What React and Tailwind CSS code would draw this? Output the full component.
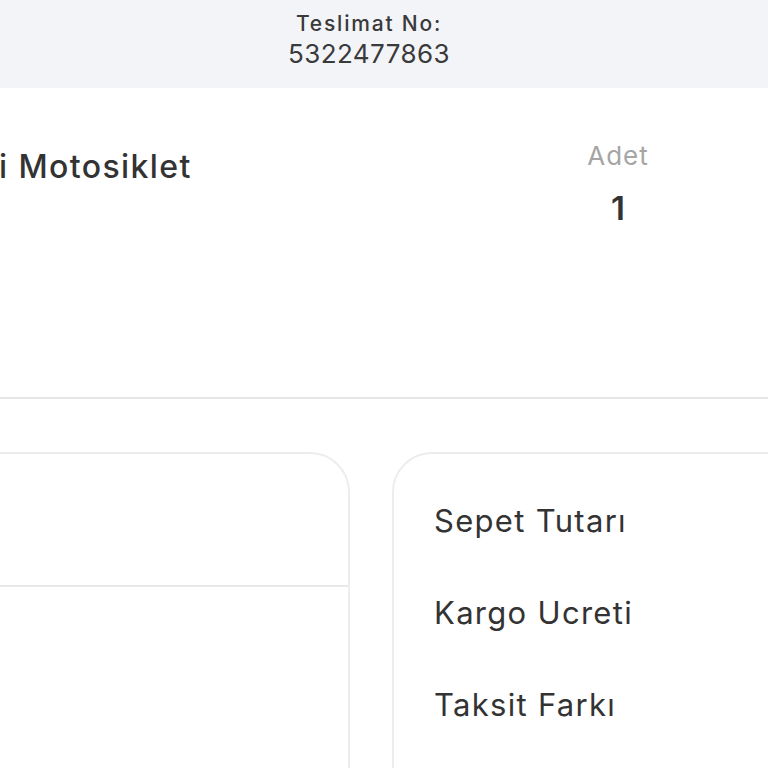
import React from "react";

const font = { fontFamily: '"Inter", "Noto Sans", sans-serif' };

export default function App() {
  return (
    <div className="w-[768px] h-[768px] overflow-hidden bg-white text-[#333]" style={font}>
      {/* Teslimat bar */}
      <div className="h-[88px] bg-[#f3f4f8] flex flex-col items-center justify-center pr-[30px] pb-[6px]">
        <div className="text-[21px] leading-[26px] text-[#3a3a3a] font-medium tracking-[1.8px]">Teslimat No:</div>
        <div className="text-[26px] leading-[34px] text-[#3a3a3a] tracking-[0.4px]">5322477863</div>
      </div>

      {/* Product row */}
      <div className="h-[311px] flex border-b-2 border-[#e6e6e6]">
        <div className="flex-1 pt-[59px]">
          <div className="text-[32px] leading-[40px] font-medium text-[#333] tracking-[1.4px] -ml-[1px]">i Motosiklet</div>
        </div>
        <div className="w-[140px] mr-[80px] flex flex-col items-center pt-[52px]">
          <div className="text-[26px] leading-[32px] text-[#a5a5a5] tracking-[1px]">Adet</div>
          <div className="text-[33px] leading-[40px] font-semibold text-[#333] mt-[16px]">1</div>
        </div>
      </div>

      {/* Cards */}
      <div className="flex gap-[42px] pt-[53px]">
        <div className="w-[400px] -ml-[50px] shrink-0 h-[400px] border-2 border-[#ededed] rounded-[40px]">
          <div className="h-[133px] border-b-2 border-[#e8e8e8]" />
        </div>
        <div className="w-[420px] shrink-0 h-[400px] border-2 border-[#ededed] rounded-[40px] pl-[40px] pt-[47px] flex flex-col gap-[52px]">
          <div className="text-[31px] leading-[40px] text-[#333] tracking-[1.3px]">Sepet Tutarı</div>
          <div className="text-[31px] leading-[40px] text-[#333] tracking-[1.3px]">Kargo Ucreti</div>
          <div className="text-[31px] leading-[40px] text-[#333] tracking-[1.3px]">Taksit Farkı</div>
        </div>
      </div>
    </div>
  );
}
